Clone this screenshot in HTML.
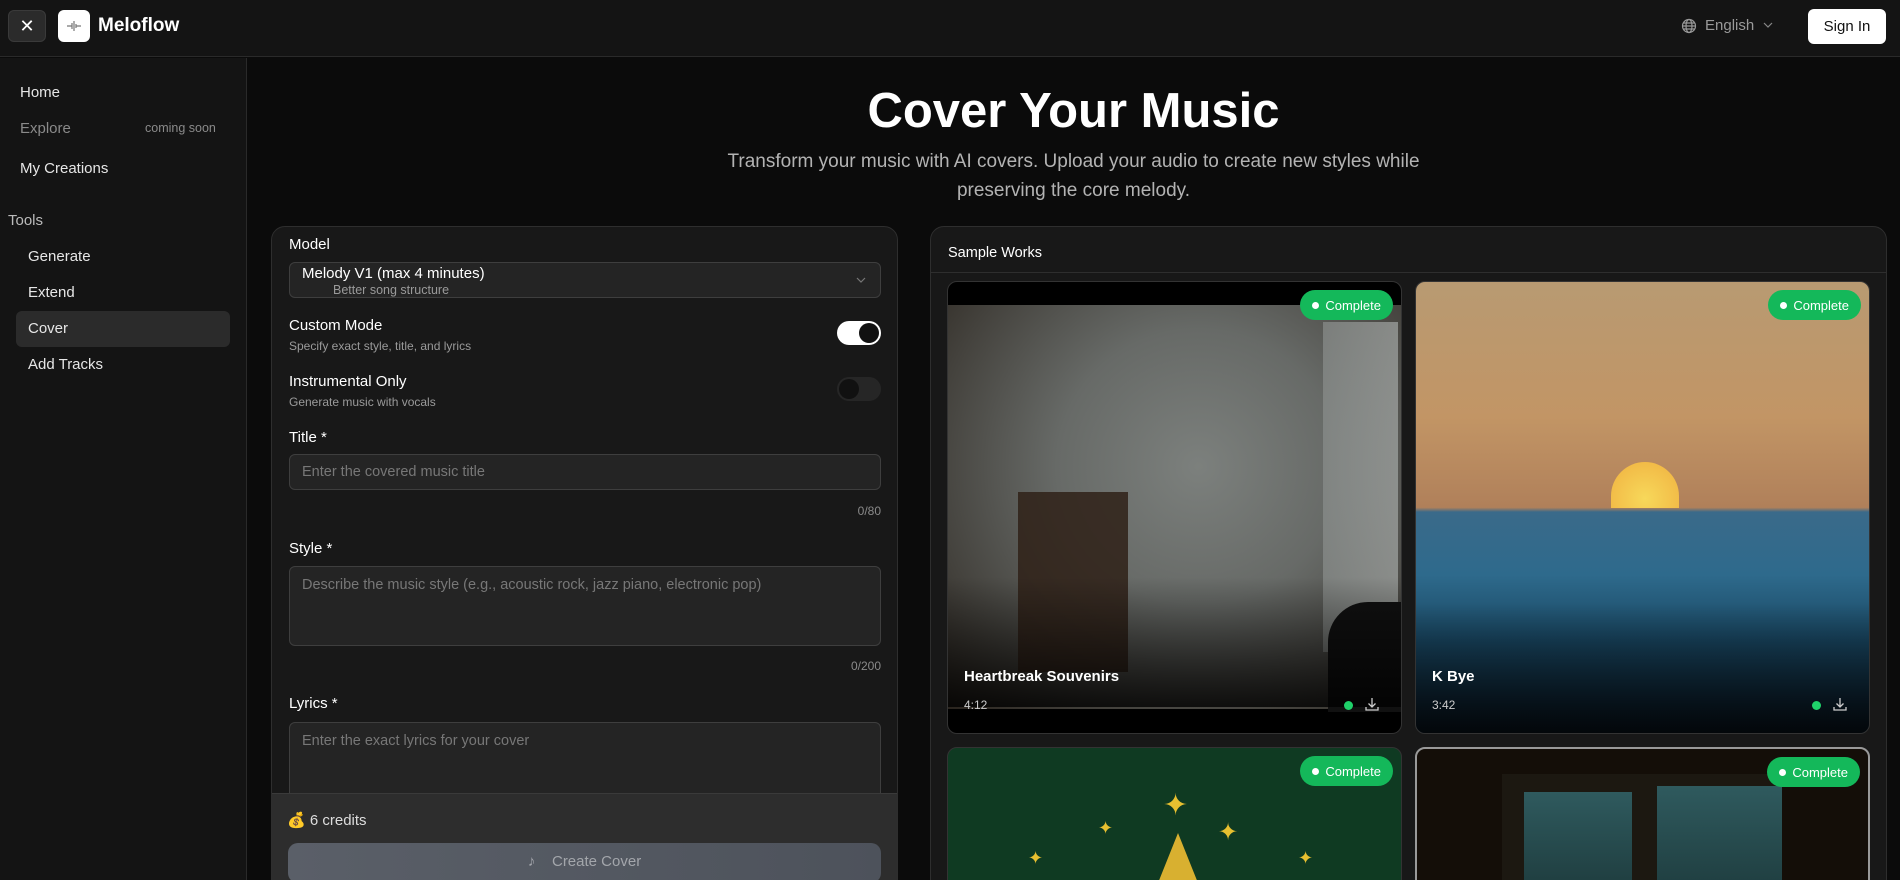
<!DOCTYPE html>
<html><head><meta charset="utf-8">
<style>
*{box-sizing:border-box;margin:0;padding:0}
html,body{width:1900px;height:880px;overflow:hidden}
body{background:#0b0b0b;font-family:"Liberation Sans",sans-serif;color:#fff;position:relative}
.abs{position:absolute}
.hdr{left:0;top:0;width:1900px;height:57px;background:#141414;border-bottom:1px solid #2a2a2a}
.side{left:0;top:58px;width:247px;height:822px;background:#141414;border-right:1px solid #2a2a2a}
.nav{position:absolute;font-size:15px;color:#e6e6e6}
.lbl{position:absolute;font-size:15px;color:#fff;left:17px}
.sub{position:absolute;font-size:12px;color:#9a9a9a;left:17px}
.inp{position:absolute;left:17px;width:592px;background:#242424;border:1px solid #3e3e3e;border-radius:6px;font-size:14.5px;color:#777;padding-left:12px}
.card{position:absolute;width:455px;border-radius:10px;overflow:hidden;border:1px solid #333}
.badge{position:absolute;right:8px;top:8px;height:30px;padding:0 12px 0 12px;background:#14b85a;border-radius:15px;font-size:13px;color:#fff;display:flex;align-items:center;gap:6px}
.badge:before{content:"";width:7px;height:7px;border-radius:50%;background:#fff}
.ov{position:absolute;left:0;right:0;bottom:0;height:130px;background:linear-gradient(rgba(0,0,0,0),rgba(0,0,0,.8))}
.ct{position:absolute;left:16px;font-size:15px;font-weight:bold}
.cd{position:absolute;left:16px;font-size:12px;color:#ccc}
.dot{position:absolute;width:9px;height:9px;border-radius:50%;background:#1fd16a}
</style></head><body>
<div class="abs hdr">
  <div class="abs" style="left:8px;top:10px;width:38px;height:32px;background:#2b2b2b;border:1px solid #3a3a3a;border-radius:6px;color:#fff;font-size:18px;text-align:center;line-height:30px">✕</div>
  <div class="abs" style="left:58px;top:10px;width:32px;height:32px;background:#fff;border-radius:6px">
    <svg width="32" height="32" viewBox="0 0 32 32"><path d="M9 16h5M18 16h5M14 13v6M16 11v10M18 14v4" stroke="#777" stroke-width="1.2" fill="none"/></svg>
  </div>
  <div class="abs" style="left:98px;top:15px;font-size:19px;font-weight:bold">Meloflow</div>
  <svg class="abs" style="left:1681px;top:18px" width="16" height="16" viewBox="0 0 16 16" fill="none" stroke="#999" stroke-width="1.2"><circle cx="8" cy="8" r="6.5"/><ellipse cx="8" cy="8" rx="3" ry="6.5"/><path d="M1.5 8h13M2.5 5h11M2.5 11h11"/></svg>
  <div class="abs" style="left:1705px;top:17px;font-size:15px;color:#9a9a9a">English</div>
  <svg class="abs" style="left:1763px;top:21px" width="10" height="8" viewBox="0 0 10 8"><path d="M1 2l4 4 4-4" stroke="#888" stroke-width="1.2" fill="none"/></svg>
  <div class="abs" style="left:1808px;top:9px;width:78px;height:35px;background:#fff;border-radius:6px;color:#111;font-size:15px;text-align:center;line-height:35px">Sign In</div>
</div>
<div class="abs side">
  <div class="nav" style="left:20px;top:26px">Home</div>
  <div class="nav" style="left:20px;top:62px;color:#8a8a8a">Explore</div>
  <div class="nav" style="left:145px;top:63px;font-size:12.5px;color:#8a8a8a">coming soon</div>
  <div class="nav" style="left:20px;top:102px">My Creations</div>
  <div class="nav" style="left:8px;top:154px;color:#bbb">Tools</div>
  <div class="nav" style="left:28px;top:190px">Generate</div>
  <div class="nav" style="left:28px;top:226px">Extend</div>
  <div class="abs" style="left:16px;top:253px;width:214px;height:36px;background:#2b2b2b;border-radius:6px"></div>
  <div class="nav" style="left:28px;top:262px">Cover</div>
  <div class="nav" style="left:28px;top:298px">Add Tracks</div>
</div>
<div class="abs" style="left:247px;top:83px;width:1653px;text-align:center;font-size:49px;font-weight:bold">Cover Your Music</div>
<div class="abs" style="left:247px;top:147px;width:1653px;text-align:center;font-size:19px;color:#b3b3b3;line-height:29px">Transform your music with AI covers. Upload your audio to create new styles while<br>preserving the core melody.</div>

<div class="abs" style="left:271px;top:226px;width:627px;height:680px;background:#181818;border:1px solid #2e2e2e;border-radius:14px;overflow:hidden">
  <div class="lbl" style="top:9px">Model</div>
  <div class="inp" style="top:35px;height:36px;color:#fff;padding-left:0">
    <div class="abs" style="left:12px;top:2px;font-size:15px">Melody V1 (max 4 minutes)</div>
    <div class="abs" style="left:43px;top:20px;font-size:12.5px;color:#9a9a9a">Better song structure</div>
    <svg class="abs" style="right:14px;top:13px" width="10" height="8" viewBox="0 0 10 8"><path d="M1 2l4 4 4-4" stroke="#777" stroke-width="1.2" fill="none"/></svg>
  </div>
  <div class="lbl" style="top:90px">Custom Mode</div>
  <div class="sub" style="top:112px">Specify exact style, title, and lyrics</div>
  <div class="abs" style="left:565px;top:94px;width:44px;height:24px;border-radius:12px;background:#fff"><div class="abs" style="left:22px;top:2px;width:20px;height:20px;border-radius:50%;background:#111"></div></div>
  <div class="lbl" style="top:146px">Instrumental Only</div>
  <div class="sub" style="top:168px">Generate music with vocals</div>
  <div class="abs" style="left:565px;top:150px;width:44px;height:24px;border-radius:12px;background:#262626"><div class="abs" style="left:2px;top:2px;width:20px;height:20px;border-radius:50%;background:#111"></div></div>
  <div class="lbl" style="top:202px">Title *</div>
  <div class="inp" style="top:227px;height:36px;line-height:34px">Enter the covered music title</div>
  <div class="abs" style="right:16px;top:277px;font-size:12px;color:#8a8a8a">0/80</div>
  <div class="lbl" style="top:313px">Style *</div>
  <div class="inp" style="top:339px;height:80px;padding-top:10px">Describe the music style (e.g., acoustic rock, jazz piano, electronic pop)</div>
  <div class="abs" style="right:16px;top:432px;font-size:12px;color:#8a8a8a">0/200</div>
  <div class="lbl" style="top:468px">Lyrics *</div>
  <div class="inp" style="top:495px;height:100px;padding-top:10px">Enter the exact lyrics for your cover</div>
  <div class="abs" style="left:0;top:566px;width:627px;height:120px;background:#2d2d2d;border-top:1px solid #3a3a3a">
    <div class="abs" style="left:15px;top:17px;font-size:15px;color:#ddd">💰 6 credits</div>
    <div class="abs" style="left:16px;top:49px;width:593px;height:40px;border-radius:10px;background:linear-gradient(90deg,#5a5f68,#4d525b);color:#a3a6ab;font-size:15px;text-align:center;line-height:38px">♪&nbsp;&nbsp;&nbsp;&nbsp;Create Cover</div>
  </div>
</div>

<div class="abs" style="left:930px;top:226px;width:957px;height:680px;background:#181818;border:1px solid #2e2e2e;border-radius:14px;overflow:hidden">
  <div class="abs" style="left:17px;top:18px;font-size:14.5px">Sample Works</div>
  <div class="abs" style="left:0;top:45px;width:957px;height:1px;background:#2e2e2e"></div>
</div>

<div class="card" style="left:947px;top:281px;height:453px;background:#000">
  <div class="abs" style="left:0;top:23px;width:455px;height:404px;background:radial-gradient(ellipse at 55% 40%,#7c807d 0%,#676a67 40%,#44423d 75%,#2a241e 100%)"></div>
  <div class="abs" style="left:70px;top:210px;width:110px;height:180px;background:#2f2117;opacity:.85"></div>
  <div class="abs" style="left:375px;top:40px;width:75px;height:330px;background:linear-gradient(90deg,#8a8e8c,#a4a8a6);opacity:.7"></div>
  <div class="abs" style="left:380px;top:320px;width:80px;height:110px;border-radius:40px 0 0 0;background:#111"></div>
  <div class="ov" style="bottom:26px"></div>
  <div class="badge">Complete</div>
  <div class="ct" style="top:386px">Heartbreak Souvenirs</div>
  <div class="cd" style="top:416px">4:12</div>
  <div class="dot" style="left:396px;top:419px"></div>
  <svg class="abs" style="left:416px;top:414px" width="16" height="16" viewBox="0 0 16 16" fill="none" stroke="#ccc" stroke-width="1.3"><path d="M8 2v9M4.5 7.5L8 11l3.5-3.5M2 11v3h12v-3"/></svg>
</div>
<div class="card" style="left:1415px;top:281px;height:453px;background:linear-gradient(#b89a72 0%,#c29565 30%,#b0805a 50%,#3a6a8a 51%,#2e6a8c 65%,#184560 80%,#0d2233 100%)">
  <div class="abs" style="left:195px;top:180px;width:68px;height:46px;border-radius:34px 34px 0 0;background:radial-gradient(circle at 50% 80%,#f7d85a,#f0b040)"></div>
  <div class="ov"></div>
  <div class="badge">Complete</div>
  <div class="ct" style="top:386px">K Bye</div>
  <div class="cd" style="top:416px">3:42</div>
  <div class="dot" style="left:396px;top:419px"></div>
  <svg class="abs" style="left:416px;top:414px" width="16" height="16" viewBox="0 0 16 16" fill="none" stroke="#ccc" stroke-width="1.3"><path d="M8 2v9M4.5 7.5L8 11l3.5-3.5M2 11v3h12v-3"/></svg>
</div>
<div class="card" style="left:947px;top:747px;height:150px;background:#0f3a22">
  <div class="abs" style="left:215px;top:40px;color:#e8c030;font-size:30px">✦</div>
  <div class="abs" style="left:150px;top:70px;color:#e8c030;font-size:18px">✦</div>
  <div class="abs" style="left:270px;top:70px;color:#e8c030;font-size:24px">✦</div>
  <div class="abs" style="left:80px;top:100px;color:#e8c030;font-size:18px">✦</div>
  <div class="abs" style="left:350px;top:100px;color:#e8c030;font-size:18px">✦</div>
  <div class="abs" style="left:210px;top:85px;width:0;height:0;border-left:20px solid transparent;border-right:20px solid transparent;border-bottom:50px solid #d8b030"></div>
  <div class="badge">Complete</div>
</div>
<div class="card" style="left:1415px;top:747px;height:150px;background:#140e08;border:2px solid #999">
  <div class="abs" style="left:85px;top:25px;width:275px;height:130px;background:#1c1811"></div>
  <div class="abs" style="left:107px;top:43px;width:108px;height:100px;background:linear-gradient(#2f5a5e,#1e3c3e)"></div>
  <div class="abs" style="left:240px;top:37px;width:125px;height:110px;background:linear-gradient(#2f5a5e,#1e3c3e)"></div>
  <div class="badge">Complete</div>
</div>
</body></html>
